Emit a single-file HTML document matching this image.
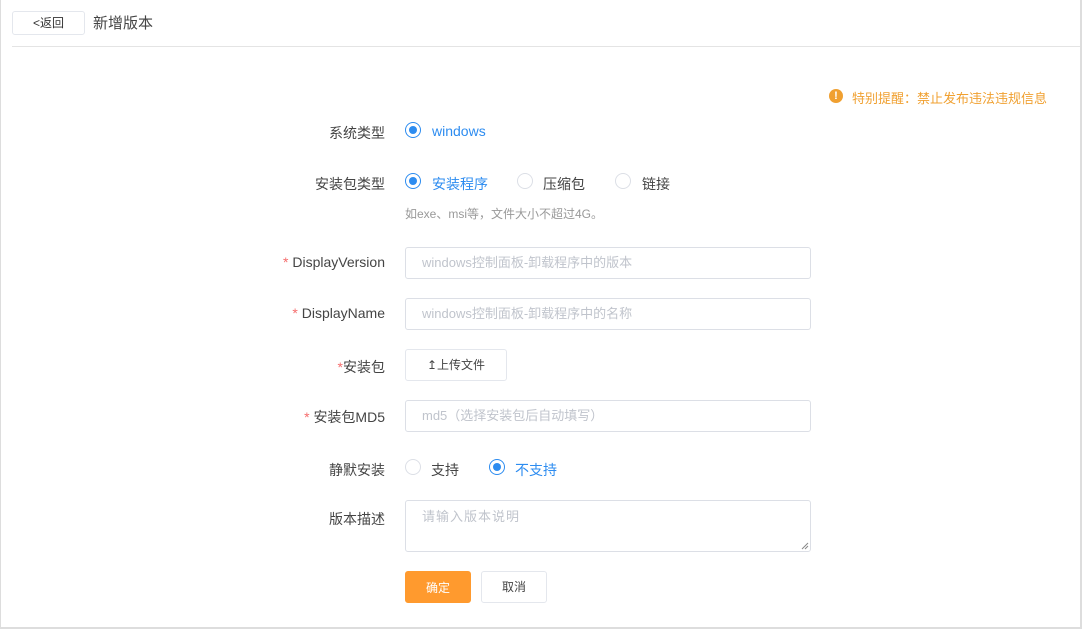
<!DOCTYPE html>
<html><head><meta charset="utf-8"><style>
*{box-sizing:border-box;margin:0;padding:0}
body{width:1082px;height:629px;background:#fff;font-family:"Liberation Sans","Noto Sans CJK SC",sans-serif;position:relative;overflow:hidden;color:#333}
.frame{position:absolute;left:0;top:0;width:1082px;height:629px;border:1px solid #ddd;border-top:none;border-right:2px solid #ddd;border-bottom:2px solid #ddd}
.a{position:absolute;white-space:nowrap}
.lbl{position:absolute;right:697px;font-size:14px;color:#444;white-space:nowrap;margin-top:1px}
.star{color:#f56c6c}
.inp{position:absolute;left:405px;width:406px;height:32px;border:1px solid #dcdfe6;border-radius:3px;font-size:13px;color:#c0c4cc;padding-left:16px;line-height:30px}
.r{position:absolute;width:16px;height:16px;border:1px solid #dcdfe6;border-radius:50%}
.r.on{border-color:#2d8cf0}
.r.on:after{content:"";position:absolute;left:3px;top:3px;width:8px;height:8px;border-radius:50%;background:#2d8cf0}
.rt{position:absolute;font-size:14px;white-space:nowrap;margin-top:1px}
.btn{position:absolute;border:1px solid #e4e7ed;border-radius:3px;font-size:12px;text-align:center}
</style></head><body>
<div class="frame"></div>
<div class="btn" style="left:12px;top:11px;width:73px;height:24px;line-height:22px;color:#333">&lt;返回</div>
<div class="a" style="left:93px;top:12px;font-size:15px;color:#444">新增版本</div>
<div class="a" style="left:12px;top:46px;width:1068px;height:1px;background:#e4e4e4"></div>

<div class="a" style="left:829px;top:89px;width:14px;height:14px;border-radius:50%;background:#f0a030;color:#fff;font-size:11px;font-weight:bold;text-align:center;line-height:14px">!</div>
<div class="a" style="left:852px;top:88px;font-size:13px;color:#f0a030">特别提醒：禁止发布违法违规信息</div>

<div class="lbl" style="top:122px">系统类型</div>
<div class="r on" style="left:405px;top:122px"></div>
<div class="rt" style="left:432px;top:122px;color:#2d8cf0">windows</div>

<div class="lbl" style="top:173px">安装包类型</div>
<div class="r on" style="left:405px;top:173px"></div>
<div class="rt" style="left:432px;top:173px;color:#2d8cf0">安装程序</div>
<div class="r" style="left:517px;top:173px"></div>
<div class="rt" style="left:543px;top:173px;color:#444">压缩包</div>
<div class="r" style="left:615px;top:173px"></div>
<div class="rt" style="left:642px;top:173px;color:#444">链接</div>
<div class="a" style="left:405px;top:205px;font-size:12px;color:#999">如exe、msi等，文件大小不超过4G。</div>

<div class="lbl" style="top:253px"><span class="star">* </span>DisplayVersion</div>
<div class="inp" style="top:247px">windows控制面板-卸载程序中的版本</div>
<div class="lbl" style="top:304px"><span class="star">* </span>DisplayName</div>
<div class="inp" style="top:298px">windows控制面板-卸载程序中的名称</div>

<div class="lbl" style="top:356px"><span class="star">*</span>安装包</div>
<div class="btn" style="left:405px;top:349px;width:102px;height:32px;line-height:30px;color:#444">↥上传文件</div>

<div class="lbl" style="top:406px"><span class="star">* </span>安装包MD5</div>
<div class="inp" style="top:400px">md5（选择安装包后自动填写）</div>

<div class="lbl" style="top:459px">静默安装</div>
<div class="r" style="left:405px;top:459px"></div>
<div class="rt" style="left:431px;top:459px;color:#444">支持</div>
<div class="r on" style="left:489px;top:459px"></div>
<div class="rt" style="left:515px;top:459px;color:#2d8cf0">不支持</div>

<div class="lbl" style="top:508px">版本描述</div>
<div class="inp" style="top:500px;height:52px;line-height:18px;padding-top:7px;letter-spacing:1px">请输入版本说明</div>
<svg class="a" style="left:801px;top:542px" width="8" height="8"><path d="M1 7L7 1M4 7L7 4" stroke="#888" stroke-width="1"/></svg>

<div class="btn" style="left:405px;top:571px;width:66px;height:32px;line-height:32px;background:#ff9a2e;border-color:#ff9a2e;color:#fff">确定</div>
<div class="btn" style="left:481px;top:571px;width:66px;height:32px;line-height:30px;color:#444">取消</div>
</body></html>
